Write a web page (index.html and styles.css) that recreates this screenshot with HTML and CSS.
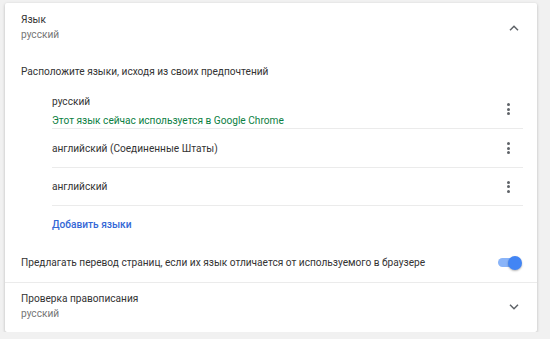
FILE: index.html
```html
<!DOCTYPE html>
<html lang="ru">
<head>
    <meta charset="UTF-8">
    <title>Языки</title>
    <link rel="stylesheet" href="styles.css">
</head>
<body>
    <div class="card">
        <div class="section-head">
            <div class="head-text">
                <div class="title">Язык</div>
                <div class="secondary">русский</div>
            </div>
            <svg class="chevron" width="10" height="6" viewBox="0 0 10 6">
                <path d="M1 5.2 L5 1.2 L9 5.2" fill="none" stroke="#5f6368" stroke-width="1.5"/>
            </svg>
        </div>

        <div class="lang-block">
            <div class="block-label">Расположите языки, исходя из своих предпочтений</div>
            <div class="lang-list">
                <div class="lang-row first">
                    <div class="lang-text">
                        <div>русский</div>
                        <div class="used">Этот язык сейчас используется в Google Chrome</div>
                    </div>
                    <span class="dots"><i></i><i></i><i></i></span>
                </div>
                <div class="lang-row">
                    <div class="lang-text">английский (Соединенные Штаты)</div>
                    <span class="dots"><i></i><i></i><i></i></span>
                </div>
                <div class="lang-row last">
                    <div class="lang-text">английский</div>
                    <span class="dots"><i></i><i></i><i></i></span>
                </div>
                <div class="add-link">Добавить языки</div>
            </div>
        </div>

        <div class="toggle-row">
            <span>Предлагать перевод страниц, если их язык отличается от используемого в браузере</span>
            <span class="toggle"><span class="knob"></span></span>
        </div>

        <div class="section-head spell">
            <div class="head-text">
                <div class="title">Проверка правописания</div>
                <div class="secondary">русский</div>
            </div>
            <svg class="chevron" width="10" height="6" viewBox="0 0 10 6">
                <path d="M1 0.8 L5 4.8 L9 0.8" fill="none" stroke="#5f6368" stroke-width="1.5"/>
            </svg>
        </div>
    </div>
</body>
</html>
```

FILE: styles.css
```css
* {
    margin: 0;
    padding: 0;
    box-sizing: border-box;
}

body {
    font-family: Roboto, "Liberation Sans", sans-serif;
    font-size: 10.15px;
    color: #333;
    background-color: #f1f1f1;
    padding: 3px 13px 0 5px;
}

.card {
    background: #fff;
    border-radius: 2px;
    box-shadow: 0 1px 3px rgba(0, 0, 0, 0.25);
    height: 329px;
}

.section-head {
    display: flex;
    align-items: center;
    justify-content: space-between;
    padding: 9px 18px 0 16px;
    height: 46px;
    align-items: flex-start;
}

.title,
.secondary {
    line-height: 15px;
}

.secondary {
    color: #757575;
}

.chevron {
    margin-top: 13px;
}

.lang-block {
    padding: 15px 14px 0 16px;
}

.block-label {
    line-height: 16px;
}

.lang-list {
    padding: 12px 0 0 31px;
}

.lang-row {
    display: flex;
    align-items: center;
    justify-content: space-between;
    height: 39px;
    border-bottom: 1px solid #ebebeb;
    padding-right: 13px;
}

.lang-row.first {
    height: 37px;
    align-items: flex-start;
}

.lang-row.first .dots {
    margin-top: 11px;
}

.lang-row.last {
    height: 38px;
}

.lang-text {
    line-height: 19px;
}

.used {
    color: #0b8043;
}

.dots {
    display: flex;
    flex-direction: column;
    gap: 1.5px;
}

.dots i {
    width: 3px;
    height: 3px;
    border-radius: 50%;
    background: #5f6368;
}

.add-link {
    color: #3367d6;
    font-weight: 500;
    line-height: 16px;
    padding-top: 11px;
}

.toggle-row {
    display: flex;
    align-items: center;
    justify-content: space-between;
    padding: 0 19px 0 16px;
    height: 40px;
    margin-top: 10px;
    border-bottom: 1px solid #ebebeb;
}

.toggle {
    position: relative;
    width: 20px;
    height: 9px;
    border-radius: 5px;
    background: #8ab4f8;
}

.knob {
    position: absolute;
    right: -4px;
    top: -2.5px;
    width: 14px;
    height: 14px;
    border-radius: 50%;
    background: #4285f4;
    box-shadow: 0 1px 2px rgba(0, 0, 0, 0.3);
}

.spell {
    padding-top: 8px;
    height: 48px;
}
```
